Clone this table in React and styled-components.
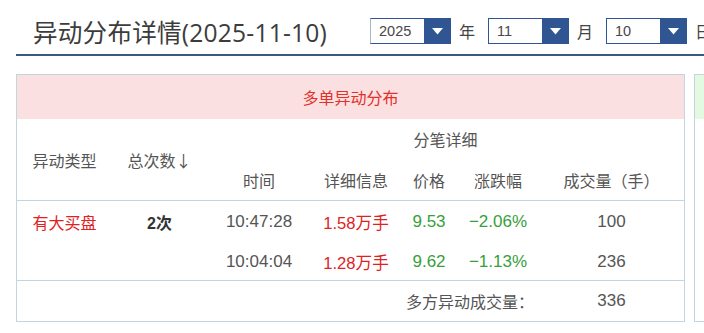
import React from "react";
import styled, { createGlobalStyle } from "styled-components";

const GlobalStyle = createGlobalStyle`
  html, body { margin: 0; padding: 0; background: #fff; overflow: hidden; }
  body { font-family: "Liberation Sans", "Noto Sans CJK SC", sans-serif; }
`;

const Page = styled.div`
  width: 1400px;
`;

const HeaderBar = styled.div`
  display: flex;
  align-items: center;
  margin-left: 16px;
  height: 46px;
  padding-top: 8px;
  border-bottom: 2px solid #3a5a86;
`;

const Title = styled.h1`
  flex: 0 0 354px;
  box-sizing: border-box;
  margin: 0;
  padding-left: 17px;
  font-family: "Open Sans", "Noto Sans CJK SC", sans-serif;
  font-size: 24.6px;
  font-weight: 400;
  color: #3c3c3c;
  letter-spacing: 0.2px;
`;

const DateGroup = styled.div`
  display: flex;
  align-items: center;
`;

const Select = styled.div`
  display: flex;
  width: 81px;
  height: 26px;
  box-sizing: border-box;
`;

const SelectValue = styled.div`
  flex: 1;
  display: flex;
  align-items: center;
  padding-left: 8px;
  box-sizing: border-box;
  border: 1px solid #2f5593;
  border-left-color: ${(p) => (p.$soft ? "#a9b6c9" : "#2f5593")};
  border-right: none;
  font-family: "Liberation Sans", sans-serif;
  font-size: 14.5px;
  color: #484848;
`;

const SelectButton = styled.div`
  flex: 0 0 27px;
  display: flex;
  align-items: center;
  justify-content: center;
  background: #2f5593;
`;

const DateLabel = styled.span`
  width: 16px;
  margin: 0 13px 0 8px;
  font-family: "Noto Sans CJK SC", sans-serif;
  font-size: 16px;
  color: #444;
`;

const Cards = styled.div`
  display: flex;
  align-items: stretch;
  gap: 9px;
  margin-top: 18px;
  padding-left: 16px;
`;

const Card = styled.section`
  flex: 0 0 669px;
  display: flex;
  flex-direction: column;
  box-sizing: border-box;
  border: 1px solid #c4d4e0;
`;

const CardHeader = styled.div`
  flex: 0 0 44px;
  display: flex;
  align-items: center;
  justify-content: center;
  background: ${(p) => (p.$tone === "up" ? "#fae0e1" : "#e3fae0")};
  color: ${(p) => (p.$tone === "up" ? "#e2302c" : "#2f9a3a")};
  font-family: "Noto Sans CJK SC", sans-serif;
  font-size: 16px;
`;

const EmptyState = styled.div`
  flex: 1;
  display: flex;
  align-items: center;
  justify-content: center;
  font-family: "Noto Sans CJK SC", sans-serif;
  font-size: 15px;
  color: #999;
`;

const Table = styled.table`
  width: 100%;
  border-collapse: collapse;
  table-layout: fixed;
`;

const HeadCell = styled.th`
  height: ${(p) => p.$h || 40}px;
  padding: 0;
  font-weight: 400;
  font-size: 16px;
  color: #555;
  text-align: center;
  vertical-align: middle;
  font-family: "Noto Sans CJK SC", sans-serif;
`;

const HeadRow = styled.tr`
  border-bottom: ${(p) => (p.$last ? "1px solid #c4d4e0" : "none")};
`;

const Row = styled.tr`
  border-top: ${(p) => (p.$footer ? "1px solid #c4d4e0" : "none")};
`;

const Cell = styled.td`
  height: 40px;
  padding: ${(p) => (p.$footer ? "1px 0 0" : "3px 0 0")};
  box-sizing: border-box;
  text-align: center;
  vertical-align: middle;
  font-size: ${(p) => (p.$num ? "17px" : p.$mixed ? "16.6px" : "16px")};
  font-weight: ${(p) => (p.$bold ? 700 : 400)};
  color: ${(p) =>
    p.$tone === "red" ? "#e0221f" : p.$tone === "green" ? "#38a03b" : p.$bold ? "#333" : "#555"};
`;

const Arrow = () => (
  <svg width="11" height="7" viewBox="0 0 11 7">
    <path d="M0 0 H11 L5.5 6.5 Z" fill="#fff" />
  </svg>
);

const DateSelect = ({ value, soft }) => (
  <Select>
    <SelectValue $soft={soft}>{value}</SelectValue>
    <SelectButton>
      <Arrow />
    </SelectButton>
  </Select>
);

const colWidths = [95, 95, 104, 90, 56, 82, 145];

const DetailTable = ({ type, count, rows, footerLabel, total }) => (
  <Table>
    <colgroup>
      {colWidths.map((w, i) => (
        <col key={i} style={{ width: w }} />
      ))}
    </colgroup>
    <thead>
      <HeadRow>
        <HeadCell rowSpan={2}>异动类型</HeadCell>
        <HeadCell rowSpan={2}>总次数↓</HeadCell>
        <HeadCell colSpan={5}>分笔详细</HeadCell>
      </HeadRow>
      <HeadRow $last>
        <HeadCell $h={41}>时间</HeadCell>
        <HeadCell $h={41}>详细信息</HeadCell>
        <HeadCell $h={41}>价格</HeadCell>
        <HeadCell $h={41}>涨跌幅</HeadCell>
        <HeadCell $h={41}>成交量（手）</HeadCell>
      </HeadRow>
    </thead>
    <tbody>
      {rows.map((r, i) => (
        <Row key={i}>
          <Cell $tone="red">{i === 0 ? type : ""}</Cell>
          <Cell $bold>{i === 0 ? count : ""}</Cell>
          <Cell $num>{r.time}</Cell>
          <Cell $mixed $tone="red">{r.info}</Cell>
          <Cell $num $tone="green">{r.price}</Cell>
          <Cell $num $tone="green">{r.change}</Cell>
          <Cell $num>{r.volume}</Cell>
        </Row>
      ))}
      <Row $footer>
        <Cell $footer colSpan={4} />
        <Cell $footer colSpan={2}>{footerLabel}</Cell>
        <Cell $footer $num>{total}</Cell>
      </Row>
    </tbody>
  </Table>
);

export default function App() {
  return (
    <Page>
      <GlobalStyle />
      <HeaderBar>
        <Title>异动分布详情(2025-11-10)</Title>
        <DateGroup>
          <DateSelect value="2025" soft />
          <DateLabel>年</DateLabel>
          <DateSelect value="11" />
          <DateLabel>月</DateLabel>
          <DateSelect value="10" />
          <DateLabel>日</DateLabel>
        </DateGroup>
      </HeaderBar>
      <Cards>
        <Card>
          <CardHeader $tone="up">多单异动分布</CardHeader>
          <DetailTable
            type="有大买盘"
            count="2次"
            rows={[
              { time: "10:47:28", info: "1.58万手", price: "9.53", change: "−2.06%", volume: "100" },
              { time: "10:04:04", info: "1.28万手", price: "9.62", change: "−1.13%", volume: "236" },
            ]}
            footerLabel="多方异动成交量："
            total="336"
          />
        </Card>
        <Card>
          <CardHeader $tone="down">空单异动分布</CardHeader>
          <EmptyState>暂无空单异动</EmptyState>
        </Card>
      </Cards>
    </Page>
  );
}
